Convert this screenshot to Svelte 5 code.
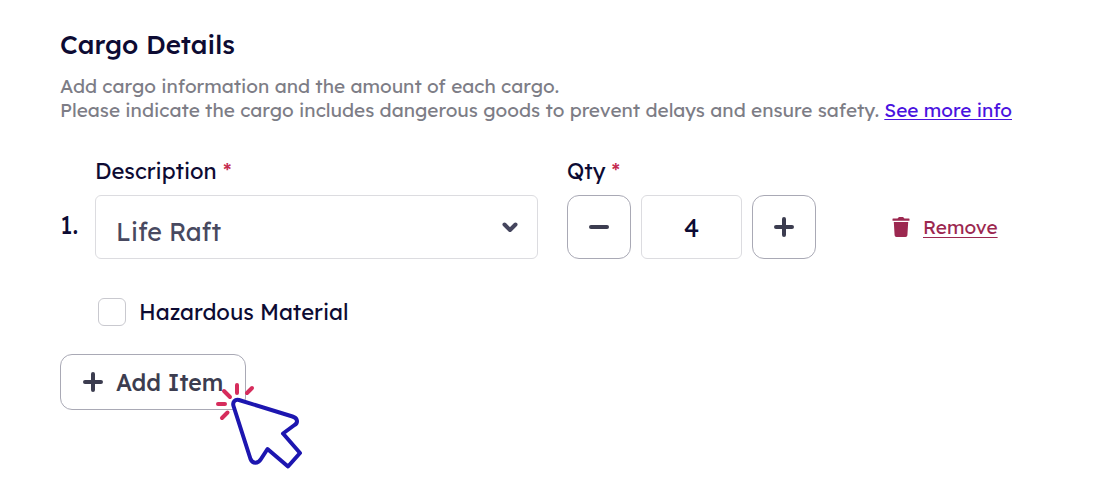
<section class="cargo">
  <header>
    <h2 class="title">Cargo Details</h2>
    <p class="intro">
      Add cargo information and the amount of each cargo.<br>
      Please indicate the cargo includes dangerous goods to prevent delays and ensure safety.
      <a class="info-link" href="#info">See more info</a>
    </p>
  </header>

  <form class="item" onsubmit={(event) => event.preventDefault()}>
    <span class="number">1.</span>

    <div class="field field--description">
      <label class="label" for="description">Description <span class="required">*</span></label>
      <div class="select-wrap">
        <select class="select" id="description" bind:value={description}>
          {#each options as option}
            <option>{option}</option>
          {/each}
        </select>
        <svg class="chevron" viewBox="0 0 16 12" aria-hidden="true">
          <path d="M2.5 3.5 8 9l5.5-5.5" />
        </svg>
      </div>
    </div>

    <div class="field">
      <label class="label" for="quantity">Qty <span class="required">*</span></label>
      <div class="stepper">
        <button class="step" type="button" aria-label="Decrease" onclick={decrease}>
          <svg class="sign" viewBox="0 0 20 20" aria-hidden="true"><path d="M2 10h16" /></svg>
        </button>
        <input class="quantity" id="quantity" type="text" inputmode="numeric" bind:value={quantity}>
        <button class="step" type="button" aria-label="Increase" onclick={increase}>
          <svg class="sign" viewBox="0 0 20 20" aria-hidden="true"><path d="M2 10h16M10 2v16" /></svg>
        </button>
      </div>
    </div>

    <a class="remove" href="#remove">
      <svg class="trash" viewBox="0 0 18 20" aria-hidden="true">
        <path d="M1 1.5h4.600l.8-1.100q.3-.4.8-.4h3.600q.5 0 .8.4l.8 1.100H17q.5 0 .5.5v1.200q0 .5-.5.5H1q-.5 0-.5-.5V2q0-.5.5-.5ZM1.800 5h14.400l-.8 13.200q-.1 1.800-1.900 1.800h-9q-1.800 0-1.900-1.800Z" />
      </svg>
      <span class="remove-text">Remove</span>
    </a>

    <label class="hazard">
      <input class="checkbox" type="checkbox" bind:checked={hazardous}>
      Hazardous Material
    </label>
  </form>

  <div class="actions">
    <button class="add" type="button">
      <svg class="sign" viewBox="0 0 20 20" aria-hidden="true"><path d="M2 10h16M10 2v16" /></svg>
      <span>Add Item</span>
    </button>
    <svg class="pointer" viewBox="0 0 90 92" aria-hidden="true">
      <path class="rays" d="M4 24h7M10 11l6 6M23 5v8M33 13l5-5M8 38l5.500-5.500" />
      <path class="arrow" d="M19.500 26c-1.200-4 1.500-7 5.500-6L78.500 36.500c5 1.500 6 6 2 8.500L69 53.500l17 19.500-12 13.500L53.500 69 47 79c-3 5-8.500 5-10.500 0Z" />
    </svg>
  </div>
</section>

<style>
  :global(body) {
    background: #fff;
  }

  .cargo {
    color: #0d0b33;
    font-family: Lexend, Inter, sans-serif;
    font-size: 22px;
    padding: 28px 60px 74px;
  }

  .title {
    font-size: 26px;
    font-weight: 500;
    line-height: 34px;
    margin: 0 0 12px;
  }

  .intro {
    color: #7d7d86;
    font-size: 19px;
    line-height: 24px;
    margin: 0;
  }

  .info-link {
    color: #4a12e0;
    text-underline-offset: 2px;
  }

  .item {
    display: grid;
    grid-template-columns: 35px minmax(0, 1fr) 325px 165px;
    margin-top: 34px;
  }

  .number {
    align-self: end;
    font-size: 25px;
    line-height: 68px;
  }

  .field--description {
    margin-right: 29px;
  }

  .label {
    display: block;
    line-height: 30px;
    margin-bottom: 9px;
  }

  .required {
    color: #c42b4f;
  }

  .select-wrap {
    display: grid;
  }

  .select,
  .chevron {
    grid-area: 1 / 1;
  }

  .select,
  .quantity,
  .step {
    background: #fff;
    border: 1px solid #dcdce0;
    border-radius: 6px;
    box-sizing: border-box;
    font-family: inherit;
    height: 64px;
  }

  .select {
    appearance: none;
    color: #484960;
    font-size: 25px;
    padding: 8px 48px 0 20px;
    width: 100%;
  }

  .chevron {
    align-self: center;
    fill: none;
    height: 12px;
    justify-self: end;
    margin-right: 20px;
    pointer-events: none;
    stroke: #45465e;
    stroke-linecap: round;
    stroke-linejoin: round;
    stroke-width: 4;
    width: 16px;
  }

  .stepper {
    display: flex;
    gap: 10px;
  }

  .step {
    border-color: #a9a9b5;
    border-radius: 12px;
    display: grid;
    padding: 0;
    place-items: center;
    width: 64px;
  }

  .quantity {
    color: inherit;
    font-size: 25px;
    padding: 0;
    text-align: center;
    width: 101px;
  }

  .sign {
    fill: none;
    height: 20px;
    stroke: #3c3d50;
    stroke-linecap: round;
    stroke-width: 4;
    width: 20px;
  }

  .remove {
    align-items: center;
    align-self: end;
    color: #9c2850;
    display: flex;
    font-size: 19px;
    gap: 13px;
    height: 64px;
    text-decoration: none;
  }

  .remove-text {
    text-decoration: underline;
    text-underline-offset: 3px;
  }

  .trash {
    fill: currentColor;
    height: 20px;
    width: 18px;
  }

  .hazard {
    align-items: center;
    display: flex;
    gap: 13px;
    grid-column: 2 / -1;
    justify-self: start;
    line-height: 30px;
    margin-top: 38px;
    padding-left: 3px;
  }

  .checkbox {
    appearance: none;
    background: #fff;
    border: 1px solid #c9c9cf;
    border-radius: 6px;
    box-sizing: border-box;
    height: 28px;
    margin: 0;
    width: 28px;
  }

  .checkbox:checked {
    background: #3c3d50;
  }

  .actions {
    margin-top: 27px;
    position: relative;
    width: fit-content;
  }

  .add {
    align-items: center;
    background: #fff;
    border: 1px solid #a9a9b5;
    border-radius: 12px;
    color: #3c3d50;
    display: flex;
    font-family: inherit;
    font-size: 23px;
    font-weight: 500;
    gap: 13px;
    height: 56px;
    padding: 0 22px;
  }

  .pointer {
    fill: none;
    height: 92px;
    left: calc(100% - 32px);
    pointer-events: none;
    position: absolute;
    stroke-linecap: round;
    stroke-linejoin: round;
    stroke-width: 4;
    top: 26px;
    width: 90px;
  }

  .rays {
    stroke: #d62c5c;
  }

  .arrow {
    fill: #fff;
    stroke: #1d16b0;
  }
</style>

<script>
  // Constants
  const options = ['Life Raft', 'Life Jacket', 'Flare Kit'];

  // State
  let description = $state('Life Raft');
  let quantity = $state(4);
  let hazardous = $state(false);

  // Functions
  function decrease() {
    quantity = Math.max(0, Number(quantity) - 1);
  }

  function increase() {
    quantity = Number(quantity) + 1;
  }
</script>
